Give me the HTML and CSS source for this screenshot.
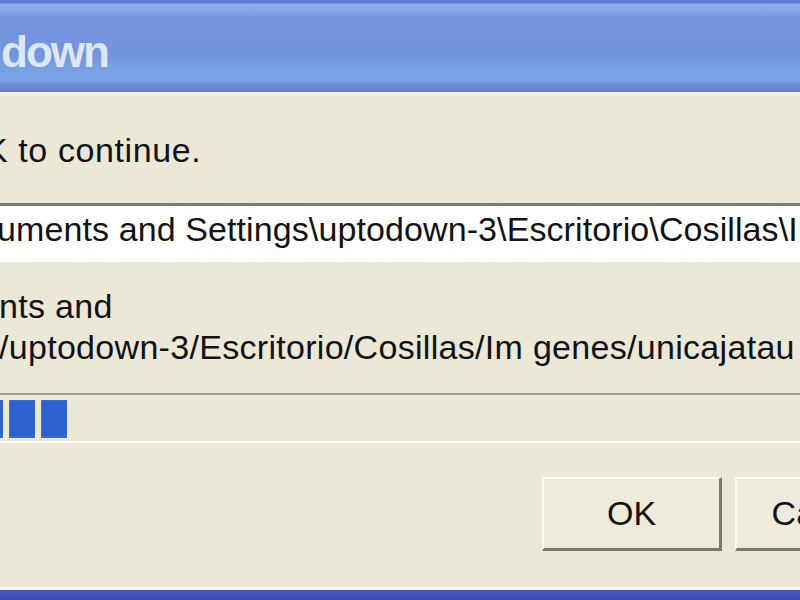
FILE: index.html
```html
<!DOCTYPE html>
<html>
<head>
<meta charset="utf-8">
<title>Uptodown</title>
<link rel="stylesheet" href="styles.css">
</head>
<body>
<div class="window">
  <div class="titlebar"><span class="title">down</span></div>
  <div class="titlebar-edge"></div>
  <div class="content">
    <p class="message">K to continue.</p>
    <div class="field"><span class="field-text">uments and Settings\uptodown-3\Escritorio\Cosillas\Im genes\unicaja</span></div>
    <p class="path">nts and<br>/uptodown-3/Escritorio/Cosillas/Im genes/unicajatau</p>
    <div class="progress">
      <div class="blocks">
        <span class="block"></span>
        <span class="block"></span>
        <span class="block"></span>
      </div>
    </div>
    <div class="buttons">
      <button class="btn">OK</button>
      <button class="btn">Cancel</button>
    </div>
  </div>
  <div class="frame-bottom"></div>
</div>
</body>
</html>
```

FILE: styles.css
```css
html, body {
  margin: 0;
  padding: 0;
  width: 800px;
  height: 600px;
  overflow: hidden;
  background: #ebe8d7;
}

.window {
  display: flex;
  flex-direction: column;
  width: 800px;
  height: 600px;
  overflow: hidden;
  font-family: "Liberation Sans", Arial, sans-serif;
  color: #121212;
}

.titlebar {
  box-sizing: border-box;
  height: 92px;
  padding-top: 27px;
  padding-left: 1px;
  background: linear-gradient(to bottom,
    #5d7bd4 0px, #5d7bd4 3px,
    #8fabf1 4px, #86a3ec 12px,
    #7595df 18px, #7393de 55px,
    #78a0e5 68px, #7aa6e8 80px,
    #6f8ad6 85px, #6a7fc9 92px);
}

.title {
  display: block;
  font-family: "Liberation Sans", Arial, sans-serif;
  font-weight: bold;
  font-size: 44px;
  line-height: 49px;
  letter-spacing: -2px;
  color: #dce7f9;
}

.titlebar-edge {
  height: 4px;
  background: linear-gradient(to bottom, #f3f2f8, #efede0);
}

.content {
  display: flex;
  flex-direction: column;
}

.message {
  margin: 34px 0 0 -15px;
  font-size: 34px;
  line-height: 41px;
  letter-spacing: 0.6px;
  white-space: nowrap;
}

.field {
  margin-top: 32px;
  border-top: 3px solid #7e7c73;
  background: #ffffff;
  padding: 3px 0 12px 0;
  white-space: nowrap;
  overflow: hidden;
}

.field-text {
  display: block;
  margin-left: -3px;
  font-size: 34px;
  line-height: 41px;
  letter-spacing: 0.1px;
}

.path {
  margin: 24px 0 0 -1px;
  font-size: 34px;
  line-height: 41px;
  letter-spacing: 0.3px;
  white-space: nowrap;
}

.progress {
  margin-top: 25px;
  border-top: 2px solid #a09e94;
  border-bottom: 2px solid #fbfaf4;
  padding: 5px 0 3px 0;
  overflow: hidden;
}

.blocks {
  display: flex;
  gap: 6px;
  margin-left: -23px;
}

.block {
  width: 26px;
  height: 38px;
  background: #2f60cf;
  box-shadow: inset 0 0 0 1px #3b6ad4;
}

.buttons {
  display: flex;
  gap: 13px;
  margin-top: 34px;
  padding-left: 542px;
}

.btn {
  flex: none;
  box-sizing: border-box;
  width: 180px;
  height: 74px;
  margin: 0;
  padding: 0;
  background: #eeebdc;
  border-style: solid;
  border-width: 2px 3px 3px 2px;
  border-color: #fbfaf3 #7a786c #7a786c #fbfaf3;
  font-family: "Liberation Sans", Arial, sans-serif;
  font-size: 34px;
  line-height: 41px;
  color: #121212;
  text-align: center;
}

.frame-bottom {
  margin-top: auto;
  height: 10px;
  border-top: 3px solid #f6f5f0;
  background: linear-gradient(to bottom, #4f5ac4, #3b47b3);
}
```
